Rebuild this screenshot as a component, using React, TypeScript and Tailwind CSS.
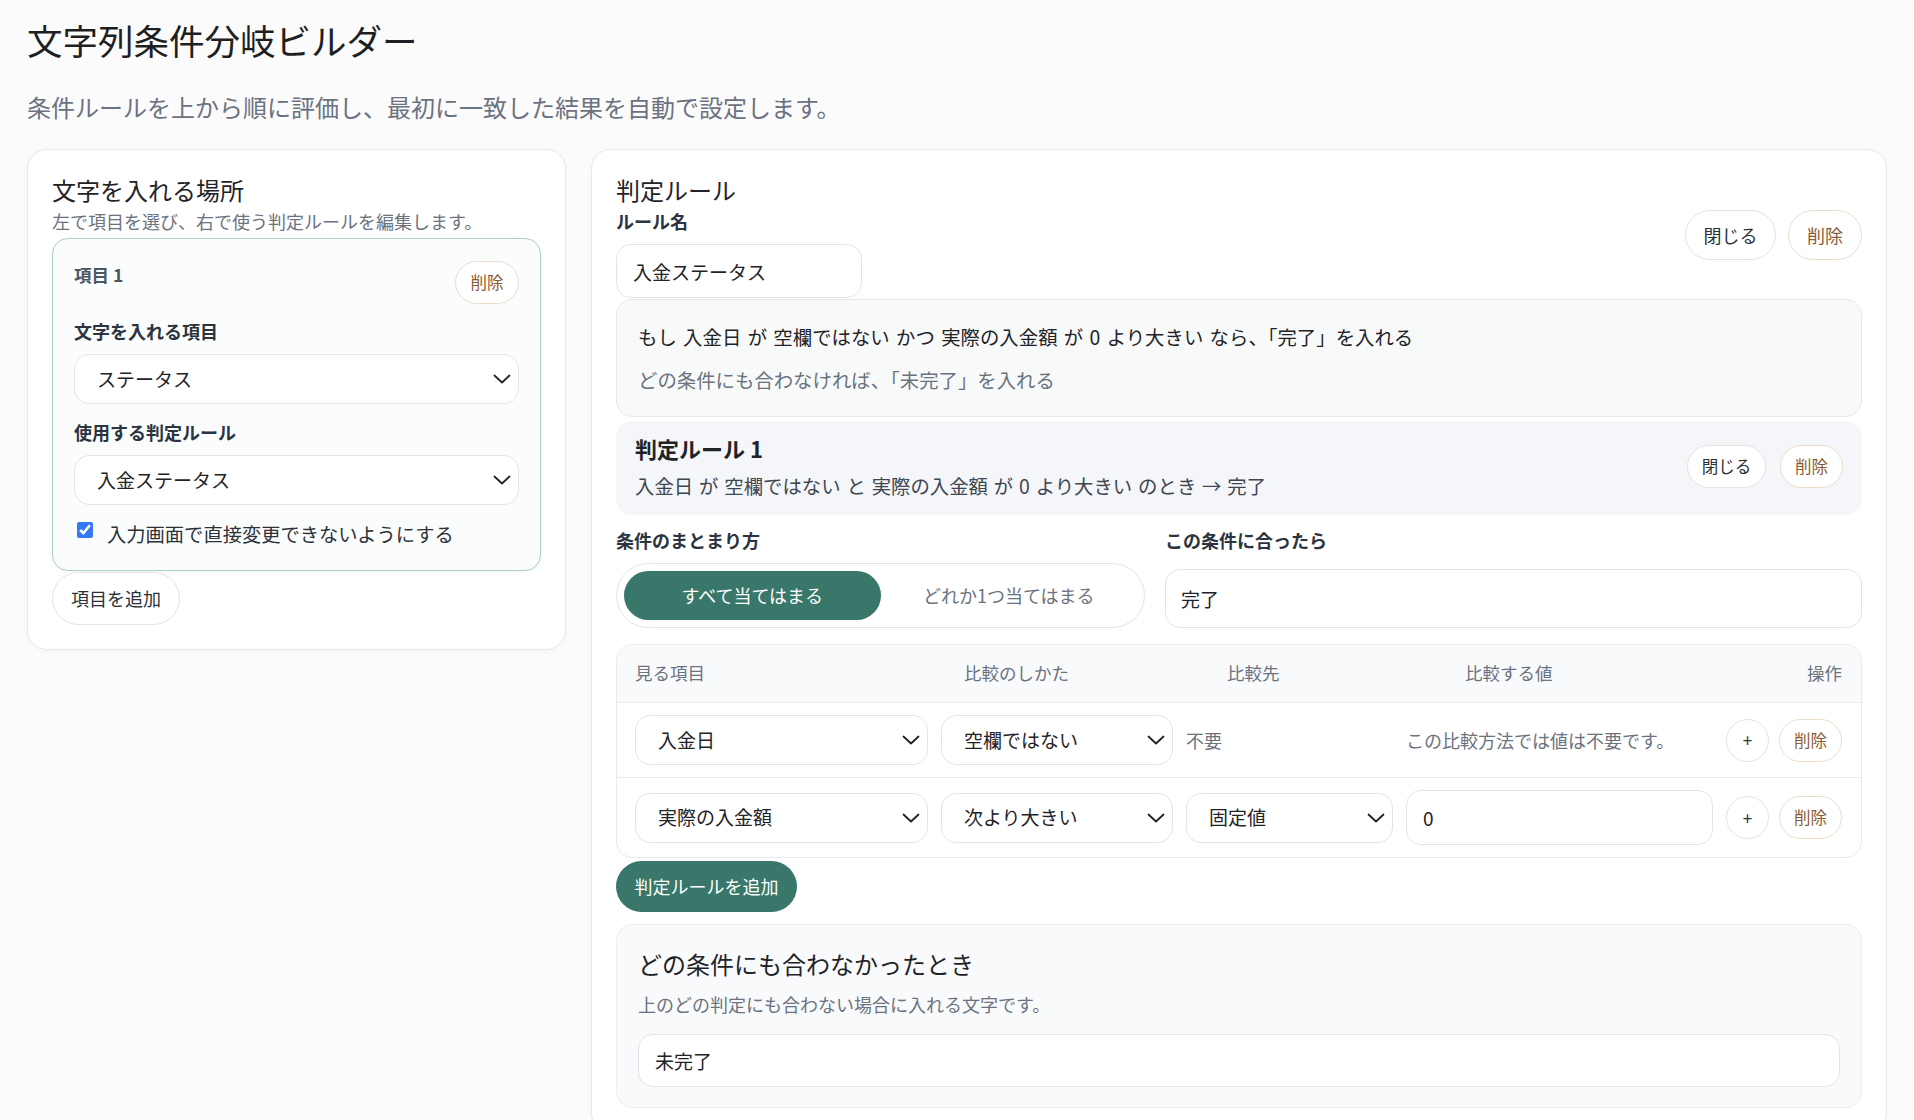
import React from "react";

function Chevron() {
  return (
    <svg
      width="18"
      height="10"
      viewBox="0 0 18 10"
      fill="none"
      className="pointer-events-none absolute right-[8px] top-1/2 -translate-y-1/2 text-[#1f2328]"
    >
      <path d="M1.5 1.5 L9 8.5 L16.5 1.5" stroke="currentColor" strokeWidth="1.8" strokeLinecap="round" strokeLinejoin="round" />
    </svg>
  );
}

function Select({ value, className = "" }: { value: string; className?: string }) {
  return (
    <div className={"relative " + className}>
      <select
        defaultValue={value}
        className="h-[50px] w-full appearance-none rounded-[15px] border border-[#e2e4e7] bg-white pl-[22px] pr-10 text-[19px] text-[#1f2328] outline-none"
      >
        <option>{value}</option>
      </select>
      <Chevron />
    </div>
  );
}

function GhostButton({ children, className = "" }: { children: React.ReactNode; className?: string }) {
  return (
    <button className={"rounded-full border border-[#e6e3de] bg-white text-[#2b3138] " + className}>
      {children}
    </button>
  );
}

function DangerButton({ className = "" }: { className?: string }) {
  return (
    <button className={"rounded-full border border-[#ecdccb] bg-white text-[#8a5a32] " + className}>
      削除
    </button>
  );
}

export default function App() {
  const rows = [
    { field: "入金日", op: "空欄ではない", target: null, value: null },
    { field: "実際の入金額", op: "次より大きい", target: "固定値", value: "0" },
  ];

  return (
    <div className="min-h-screen bg-[#fbfbfc] px-[27px] pt-[17px] font-['Noto_Sans_CJK_JP','Noto_Sans',sans-serif] text-[#1f2328]">
      <h1 className="text-[35.5px] font-normal leading-[46px] text-[#1d1f22]">文字列条件分岐ビルダー</h1>
      <p className="mt-[26px] text-[24px] leading-[36px] text-[#6b7280]">
        条件ルールを上から順に評価し、最初に一致した結果を自動で設定します。
      </p>

      <div className="mt-[24px] flex items-start gap-[25px]">
        {/* 左: 文字を入れる場所 */}
        <section className="w-[539px] shrink-0 rounded-[20px] border border-[#e7e9ec] bg-white px-[24px] pt-[22px] pb-[24px] shadow-[0_1px_4px_rgba(0,0,0,0.03)]">
          <h2 className="text-[24px] leading-[36px]">文字を入れる場所</h2>
          <p className="text-[18px] leading-[27px] text-[#6b7280]">左で項目を選び、右で使う判定ルールを編集します。</p>

          <div className="mt-[3px] rounded-[16px] border border-[#a9d0c5] bg-[#fbfdfd] px-[21px] pt-[22px] pb-[22px] shadow-[0_1px_3px_rgba(56,122,109,0.08)]">
            <div className="flex items-start justify-between">
              <span className="text-[17.5px] font-bold leading-[27px] text-[#4b5563]">項目 1</span>
              <DangerButton className="h-[43px] w-[64px] text-[16.5px]" />
            </div>
            <div className="mt-[14px] text-[18px] font-bold leading-[27px] text-[#2b3440]">文字を入れる項目</div>
            <Select value="ステータス" className="mt-[9px]" />
            <div className="mt-[15px] text-[18px] font-bold leading-[27px] text-[#2b3440]">使用する判定ルール</div>
            <Select value="入金ステータス" className="mt-[9px]" />
            <label className="mt-[16px] flex items-start gap-[14px] pl-[3px]">
              <input type="checkbox" defaultChecked className="mt-[1px] h-[16px] w-[16px] accent-[#3478f6]" />
              <span className="text-[19.3px] leading-[27px] text-[#2b3138]">入力画面で直接変更できないようにする</span>
            </label>
          </div>

          <GhostButton className="mt-px h-[53px] w-[128px] border-[#e2e4e7] text-[18px]">項目を追加</GhostButton>
        </section>

        {/* 右: 判定ルール */}
        <section className="min-w-0 flex-1 rounded-[20px] border border-[#e7e9ec] bg-white px-[24px] pt-[22px] pb-[24px] shadow-[0_1px_4px_rgba(0,0,0,0.03)]">
          <div className="flex items-center justify-between">
            <div>
              <h2 className="text-[24px] leading-[36px]">判定ルール</h2>
              <div className="text-[18px] font-bold leading-[27px] text-[#2b3440]">ルール名</div>
              <input
                defaultValue="入金ステータス"
                className="mt-[9px] h-[54px] w-[246px] rounded-[15px] border border-[#e2e4e7] bg-white px-[16px] text-[19px] outline-none"
              />
            </div>
            <div className="flex gap-[12px]">
              <GhostButton className="h-[50px] w-[91px] text-[18px]">閉じる</GhostButton>
              <DangerButton className="h-[50px] w-[74px] text-[18px]" />
            </div>
          </div>

          <div className="mt-px rounded-[16px] border border-[#e6e9ec] bg-[#f8fafa] px-[21px] py-[22px]">
            <p className="text-[19.4px] leading-[29px] text-[#1f2328] [word-spacing:2px]">
              もし 入金日 が 空欄ではない かつ 実際の入金額 が 0 より大きい なら、「完了」を入れる
            </p>
            <p className="mt-[14px] text-[19.4px] leading-[29px] text-[#6b7280]">どの条件にも合わなければ、「未完了」を入れる</p>
          </div>

          <div className="mt-[4px] flex items-center justify-between rounded-[16px] bg-[#f4f6f9] px-[19px] pt-[12px] pb-[15px]">
            <div>
              <div className="text-[22px] font-bold leading-[31px] text-[#1f2328]">判定ルール 1</div>
              <div className="mt-[8px] text-[19.4px] leading-[28px] text-[#3f4650] [word-spacing:1.5px]">
                入金日 が 空欄ではない と 実際の入金額 が 0 より大きい のとき → 完了
              </div>
            </div>
            <div className="flex gap-[14px]">
              <GhostButton className="h-[43px] w-[79px] text-[16.5px]">閉じる</GhostButton>
              <DangerButton className="h-[43px] w-[63px] text-[16.5px]" />
            </div>
          </div>

          <div className="mt-[12px] grid grid-cols-[529px_1fr] gap-x-[20px]">
            <div>
              <div className="text-[18px] font-bold leading-[27px] text-[#2b3440]">条件のまとまり方</div>
              <div className="mt-[9px] grid h-[65px] grid-cols-2 rounded-full border border-[#e2e4e7] bg-white p-[7px]">
                <button className="rounded-full bg-[#387769] text-[18px] text-white">すべて当てはまる</button>
                <button className="rounded-full text-[18px] text-[#6b7280]">どれか1つ当てはまる</button>
              </div>
            </div>
            <div>
              <div className="text-[18px] font-bold leading-[27px] text-[#2b3440]">この条件に合ったら</div>
              <input
                defaultValue="完了"
                className="mt-[15px] h-[59px] w-full rounded-[15px] border border-[#e2e4e7] bg-white px-[15px] text-[19px] outline-none"
              />
            </div>
          </div>

          <div className="mt-[16px] overflow-hidden rounded-[16px] border border-[#e8eaed] bg-white">
            <div className="grid h-[57px] grid-cols-[329px_263px_238px_1fr_auto] items-center bg-[#f8fafc] pl-[18px] pr-[19px] text-[17.5px] text-[#6b7280]">
              <span>見る項目</span>
              <span>比較のしかた</span>
              <span>比較先</span>
              <span>比較する値</span>
              <span>操作</span>
            </div>
            {rows.map((r) => (
              <div
                key={r.field}
                className="grid grid-cols-[293px_232px_207px_1fr_116px] items-center gap-x-[13px] border-t border-[#e8eaed] py-[12px] pl-[18px] pr-[19px]"
              >
                <Select value={r.field} />
                <Select value={r.op} />
                {r.target ? (
                  <Select value={r.target} />
                ) : (
                  <span className="text-[18px] text-[#6b7280]">不要</span>
                )}
                {r.value !== null ? (
                  <input
                    defaultValue={r.value}
                    className="h-[55px] w-full rounded-[15px] border border-[#e2e4e7] bg-white px-[16px] text-[19px] outline-none"
                  />
                ) : (
                  <span className="text-[18px] text-[#6b7280]">この比較方法では値は不要です。</span>
                )}
                <div className="flex items-center gap-[10px]">
                  <GhostButton className="h-[43px] w-[43px] text-[17px]">+</GhostButton>
                  <DangerButton className="h-[43px] w-[63px] text-[16.5px]" />
                </div>
              </div>
            ))}
          </div>

          <button className="mt-[3px] h-[51px] w-[181px] rounded-full bg-[#387769] text-[18px] text-white">判定ルールを追加</button>

          <div className="mt-[12px] rounded-[16px] border border-[#eceef1] bg-[#f9fafb] px-[21px] pt-[21px] pb-[20px]">
            <h3 className="text-[24px] leading-[36px] text-[#1f2328]">どの条件にも合わなかったとき</h3>
            <p className="mt-[9px] text-[18px] leading-[27px] text-[#6b7280]">上のどの判定にも合わない場合に入れる文字です。</p>
            <input
              defaultValue="未完了"
              className="mt-[16px] h-[53px] w-full rounded-[15px] border border-[#e2e4e7] bg-white px-[16px] text-[19px] outline-none"
            />
          </div>
        </section>
      </div>
    </div>
  );
}
